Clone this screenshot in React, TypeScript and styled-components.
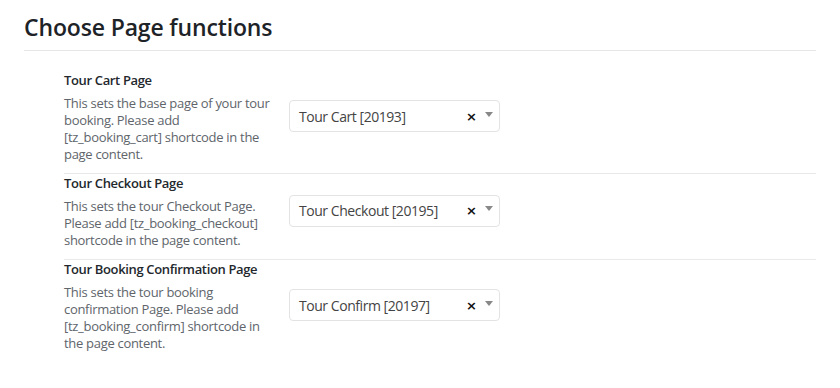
import styled, { createGlobalStyle } from "styled-components";

const GlobalStyle = createGlobalStyle`
  body {
    margin: 0;
    background: #fff;
    font-family: "Open Sans", "Noto Sans", sans-serif;
  }
`;

type PageOption = {
  title: string;
  description: string;
  value: string;
};

const pages: PageOption[] = [
  {
    title: "Tour Cart Page",
    description:
      "This sets the base page of your tour booking. Please add [tz_booking_cart] shortcode in the page content.",
    value: "Tour Cart [20193]",
  },
  {
    title: "Tour Checkout Page",
    description:
      "This sets the tour Checkout Page. Please add [tz_booking_checkout] shortcode in the page content.",
    value: "Tour Checkout [20195]",
  },
  {
    title: "Tour Booking Confirmation Page",
    description:
      "This sets the tour booking confirmation Page. Please add [tz_booking_confirm] shortcode in the page content.",
    value: "Tour Confirm [20197]",
  },
];

export default function App() {
  return (
    <>
      <GlobalStyle />
      <Wrapper>
        <Title>Choose Page functions</Title>
        <Rows>
          {pages.map(({ title, description, value }) => (
            <Row key={title}>
              <Label>{title}</Label>
              <Field>
                <Description>{description}</Description>
                <Select>
                  <SelectValue>{value}</SelectValue>
                  <Clear>×</Clear>
                  <Arrow />
                </Select>
              </Field>
            </Row>
          ))}
        </Rows>
      </Wrapper>
    </>
  );
}

const Wrapper = styled.div`
  padding: 0 24px;
`;

const Title = styled.h1`
  margin: 0;
  padding: 12px 0 8px;
  font-size: 23px;
  line-height: 30px;
  font-weight: 600;
  letter-spacing: -0.15px;
  color: #1d2327;
  border-bottom: 1px solid #e6e6e6;
`;

const Rows = styled.div`
  margin: 20px 0 0 40px;
`;

const Row = styled.div`
  padding-bottom: 10px;

  & + & {
    border-top: 1px solid #e9e9e9;
  }
`;

const Label = styled.div`
  font-size: 13px;
  line-height: 18px;
  font-weight: 600;
  letter-spacing: -0.35px;
  color: #23282d;
`;

const Field = styled.div`
  display: flex;
  align-items: center;
  gap: 15px;
  margin-top: 6px;
`;

const Description = styled.p`
  margin: 0;
  width: 210px;
  font-size: 13px;
  line-height: 17px;
  letter-spacing: -0.3px;
  color: #60656b;
`;

/* the select sits 13px above the middle of its description */
const Select = styled.div`
  box-sizing: border-box;
  width: 211px;
  height: 32px;
  margin: -13px 0 13px;
  display: flex;
  align-items: center;
  padding: 0 6px 0 9px;
  border: 1px solid #e3e3e3;
  border-radius: 4px;
  background: #fff;
`;

const SelectValue = styled.span`
  flex: 1;
  font-size: 14px;
  letter-spacing: -0.45px;
  color: #444;
`;

const Clear = styled.span`
  font-family: "DejaVu Sans", sans-serif;
  font-size: 13px;
  font-weight: bold;
  color: #111;
  margin-right: 8px;
`;

const Arrow = styled.span`
  width: 0;
  height: 0;
  margin-bottom: 4px;
  border-style: solid;
  border-width: 5px 4px 0 4px;
  border-color: #888 transparent transparent transparent;
`;
